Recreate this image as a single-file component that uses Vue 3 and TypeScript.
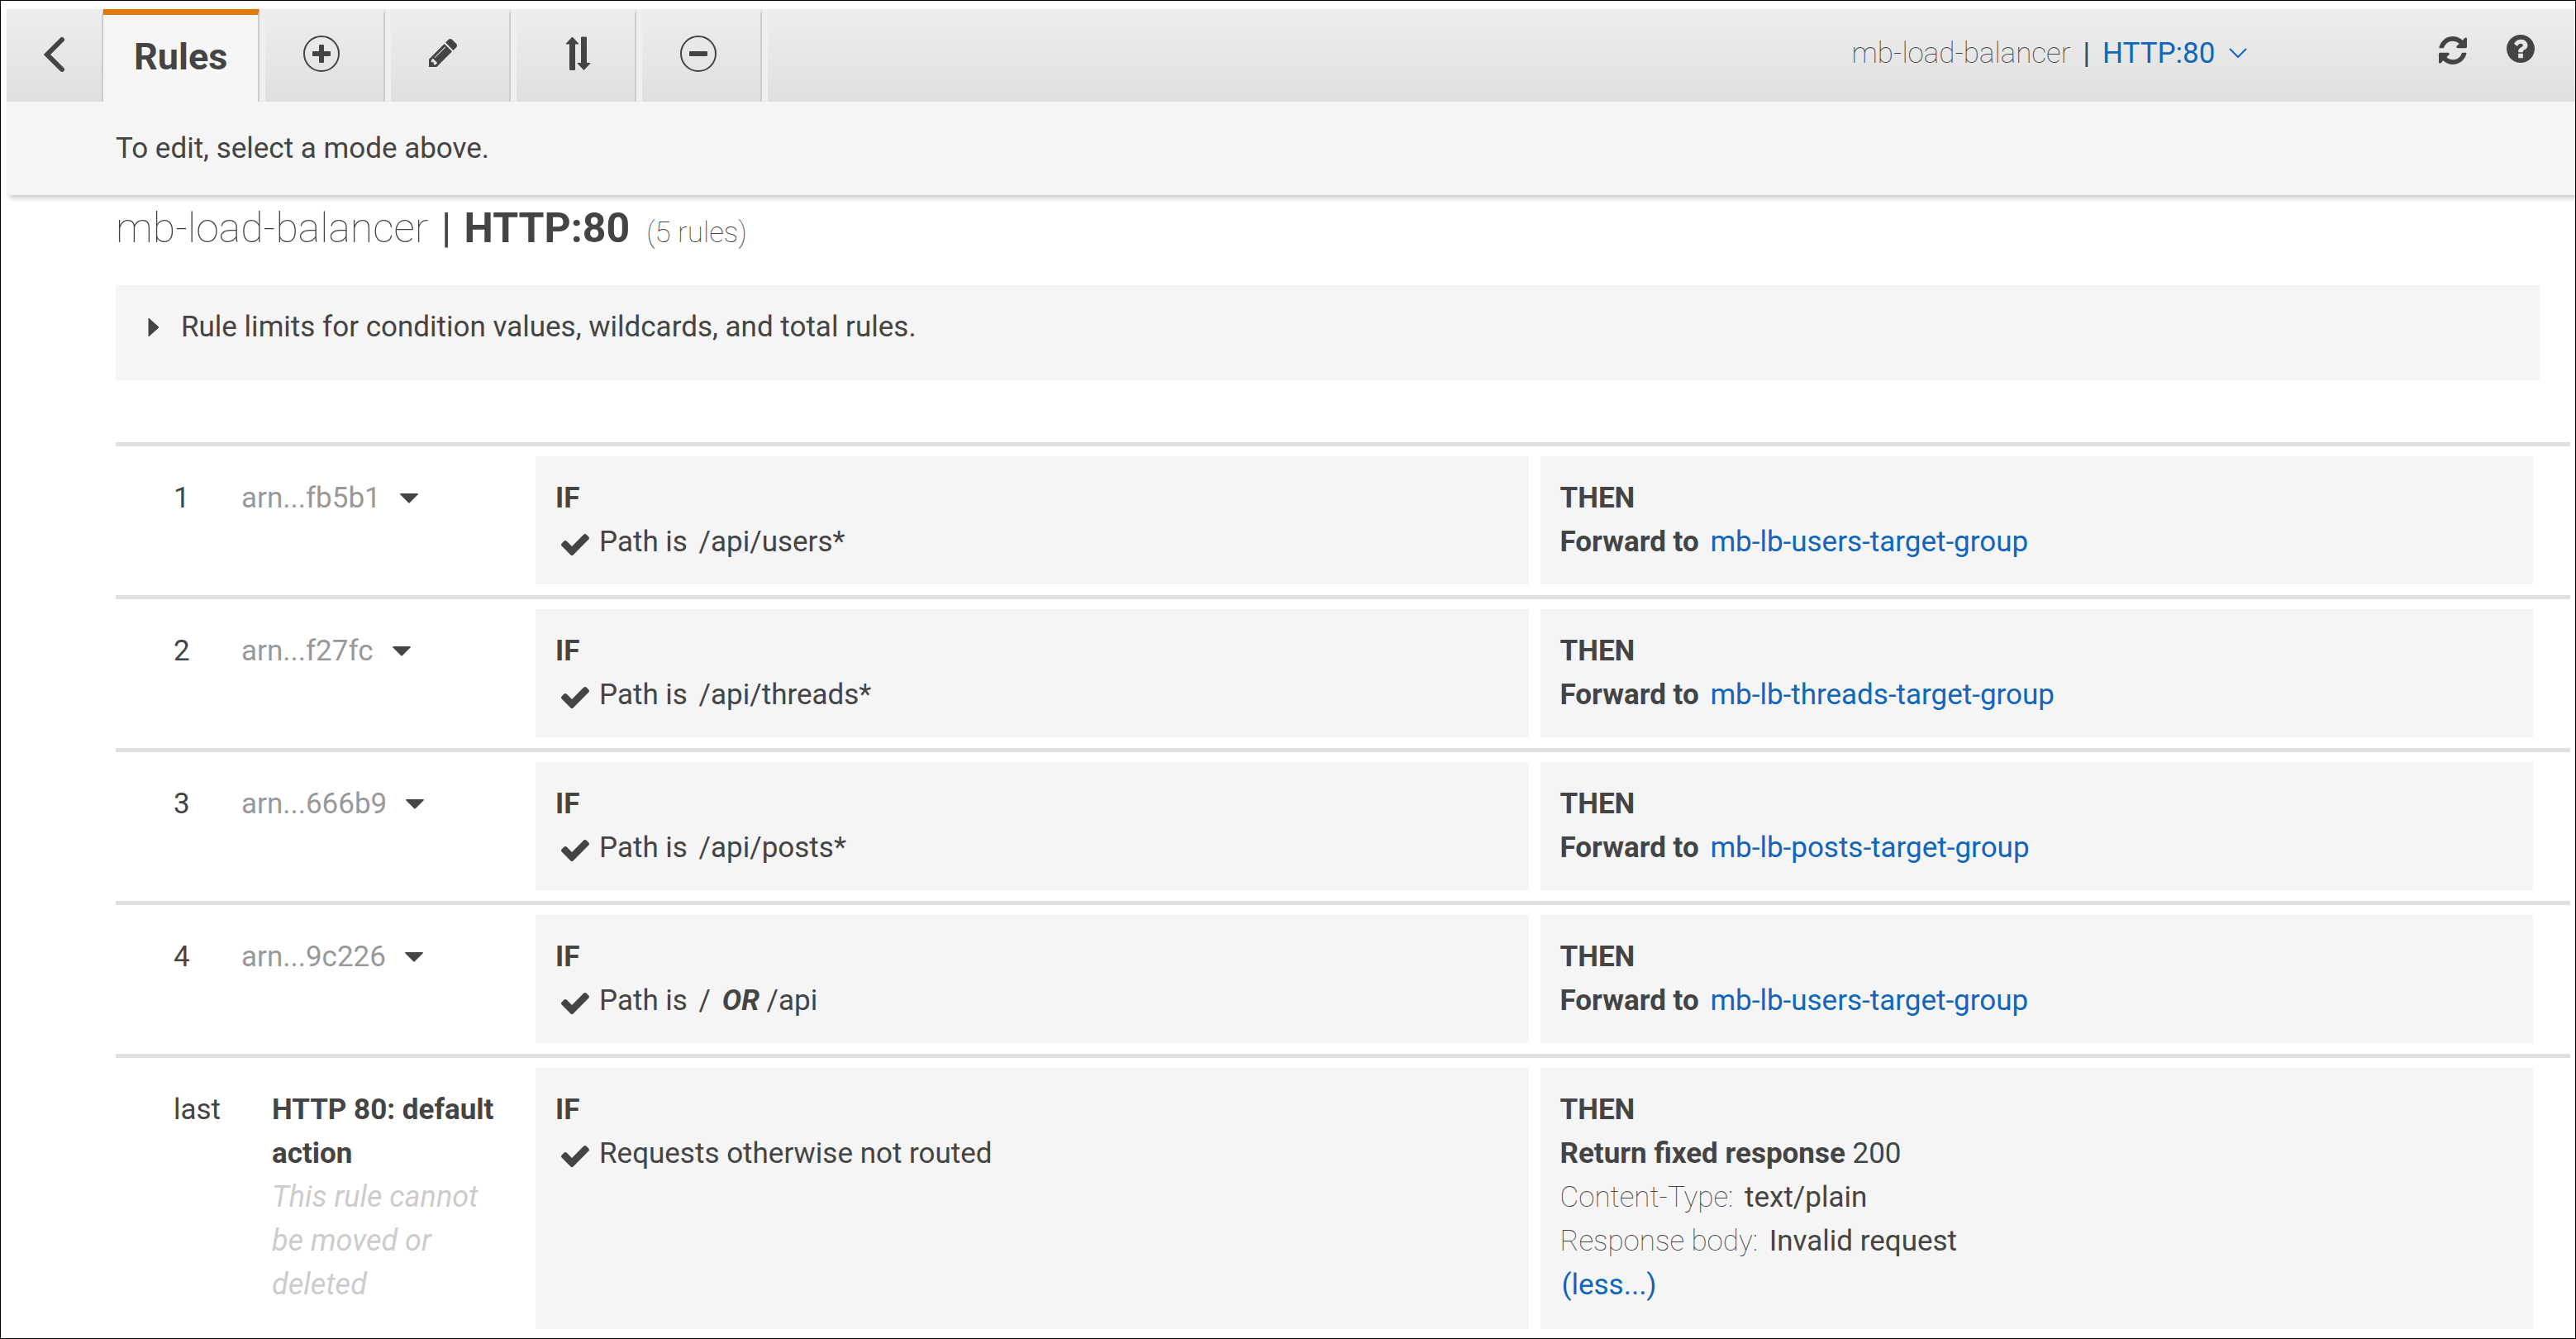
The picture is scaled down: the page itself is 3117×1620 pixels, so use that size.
<script setup lang="ts">
import { ref } from 'vue'

interface Rule {
  order: string
  arn: string
  paths: string[]
  target: string
}

const balancer = 'mb-load-balancer'
const listeners = ['HTTP:80']
const listener = ref(listeners[0])

const rules: Rule[] = [
  { order: '1', arn: 'arn...fb5b1', paths: ['/api/users*'], target: 'mb-lb-users-target-group' },
  { order: '2', arn: 'arn...f27fc', paths: ['/api/threads*'], target: 'mb-lb-threads-target-group' },
  { order: '3', arn: 'arn...666b9', paths: ['/api/posts*'], target: 'mb-lb-posts-target-group' },
  { order: '4', arn: 'arn...9c226', paths: ['/', '/api'], target: 'mb-lb-users-target-group' },
]

const checkPath =
  'M1671 566q0 40-28 68l-724 724-136 136q-28 28-68 28t-68-28l-136-136-362-362q-28-28-28-68t28-68l136-136q28-28 68-28t68 28l294 295 656-657q28-28 68-28t68 28l136 136q28 28 28 68z'
</script>

<template>
  <div class="page">
    <header class="header">
      <nav class="toolbar" aria-label="Rule modes">
        <button class="tab back" type="button" aria-label="Back">
          <svg class="tab-icon" viewBox="0 0 100 44" aria-hidden="true">
            <path d="M59 5 L41 23 L59 41" fill="none" stroke="#444" stroke-width="6" stroke-linecap="round" />
          </svg>
        </button>
        <button class="tab active" type="button">Rules</button>
        <button class="tab mode" type="button" aria-label="Add rules">
          <svg class="tab-icon" viewBox="0 0 100 44" aria-hidden="true">
            <circle cx="46" cy="22" r="21" fill="none" stroke="#444" stroke-width="2" />
            <rect x="35" y="19" width="22" height="6" rx="1" />
            <rect x="43" y="11" width="6" height="22" rx="1" />
          </svg>
        </button>
        <button class="tab mode" type="button" aria-label="Edit rules">
          <svg class="tab-icon" viewBox="0 0 100 44" aria-hidden="true">
            <svg x="24" y="4" width="34" height="34" viewBox="128 149 1515 1515">
              <path d="M491 1536l91-91-235-235-91 91v107h128v128h107zm523-928q0-22-22-22-10 0-17 7l-542 542q-7 7-7 17 0 22 22 22 10 0 17-7l542-542q7-7 7-17zm-54-192l416 416-832 832h-416v-416zm683 96q0 53-37 90l-166 166-416-416 166-165q36-38 90-38 53 0 91 38l235 234q37 39 37 91z" />
            </svg>
          </svg>
        </button>
        <button class="tab mode" type="button" aria-label="Reorder rules">
          <svg class="tab-icon" viewBox="0 0 100 44" aria-hidden="true">
            <path d="M45.500 2 L53 10 H48.500 V41.500 H42.500 V10 H38 Z" stroke="#444" stroke-linejoin="round" />
            <path d="M59.500 41.500 L52 33.500 H56.500 V2 H62.500 V33.500 H67 Z" stroke="#444" stroke-linejoin="round" />
          </svg>
        </button>
        <button class="tab mode" type="button" aria-label="Delete rules">
          <svg class="tab-icon" viewBox="0 0 100 44" aria-hidden="true">
            <circle cx="46" cy="22" r="21" fill="none" stroke="#444" stroke-width="2" />
            <rect x="35" y="19" width="22" height="6" rx="1" />
          </svg>
        </button>
        <div class="tools">
          <label class="thin" for="listener">{{ balancer }}</label>
          <span class="bar">|</span>
          <select id="listener" v-model="listener" class="listener">
            <option v-for="item in listeners" :key="item">{{ item }}</option>
          </select>
          <svg class="chevron" viewBox="0 0 22 12" aria-hidden="true">
            <path d="M1 1 L11 11 L21 1" fill="none" stroke="#16b" stroke-width="2" />
          </svg>
          <button class="tool" type="button" aria-label="Refresh">
            <svg class="refresh" viewBox="128 128 1536 1536" aria-hidden="true">
              <path d="M1639 1056q0 5-1 7-64 268-268 434.500t-478 166.500q-146 0-282.500-55t-243.500-157l-129 129q-19 19-45 19t-45-19-19-45v-448q0-26 19-45t45-19h448q26 0 45 19t19 45-19 45l-137 137q71 66 161 102t187 36q134 0 250-65t186-179q11-17 53-117 8-23 30-23h192q13 0 22.500 9.500t9.500 22.500zm25-800v448q0 26-19 45t-45 19h-448q-26 0-45-19t-19-45 19-45l138-138q-148-137-349-137-134 0-250 65t-186 179q-11 17-53 117-8 23-30 23h-199q-13 0-22.500-9.500t-9.500-22.500v-7q65-268 270-434.500t480-166.500q146 0 284 55.500t245 156.500l130-129q19-19 45-19t45 19 19 45z" />
            </svg>
          </button>
          <button class="tool" type="button" aria-label="Help">
            <svg class="help" viewBox="128 128 1536 1536" aria-hidden="true">
              <path d="M1024 1376v-192q0-14-9-23t-23-9h-192q-14 0-23 9t-9 23v192q0 14 9 23t23 9h192q14 0 23-9t9-23zm256-672q0-88-55.500-163t-138.500-116-170-41q-243 0-371 213-15 24 8 42l132 100q7 6 19 6 16 0 25-12 53-68 86-92 34-24 86-24 48 0 85.500 26t37.500 59q0 38-20 61t-68 45q-63 28-115.500 86.500t-52.500 125.500v36q0 14 9 23t23 9h192q14 0 23-9t9-23q0-19 21.500-49.500t54.500-49.500q32-18 49-28.500t46-35 44.500-48 28-60.500 12.500-81zm384 192q0 209-103 385.500t-279.500 279.500-385.500 103-385.500-103-279.500-279.500-103-385.500 103-385.500 279.500-279.500 385.500-103 385.500 103 279.500 279.500 103 385.500z" />
            </svg>
          </button>
        </div>
      </nav>
      <p class="hint">To edit, select a mode above.</p>
    </header>

    <main class="content">
      <h1 class="title">
        <span class="thin">{{ balancer }}</span> <span class="bar">|</span> <b>{{ listener }}</b>
        <small class="count">({{ rules.length + 1 }} rules)</small>
      </h1>

      <details class="limits">
        <summary>
          <svg class="marker" viewBox="0 0 14 24" aria-hidden="true"><path d="M1 1 L13 12 L1 23 Z" stroke="#444" stroke-linejoin="round" /></svg>
          Rule limits for condition values, wildcards, and total rules.
        </summary>
      </details>

      <ol class="rules">
        <li v-for="rule in rules" :key="rule.order" class="rule">
          <span class="order">{{ rule.order }}</span>
          <div class="name">
            <span class="arn">{{ rule.arn }}</span>
            <button class="caret" type="button" aria-label="Show full ARN">
              <svg viewBox="0 0 24 14" aria-hidden="true"><path d="M2 1 H22 Q23 1 23 2 L13 12 Q12 13 11 12 L1 2 Q1 1 2 1 Z" /></svg>
            </button>
          </div>
          <section class="box">
            <h2>IF</h2>
            <p class="condition">
              <svg class="check" viewBox="121 334 1550 1188" aria-hidden="true"><path :d="checkPath" /></svg>
              <span>Path is <span class="value"><template v-for="(path, i) in rule.paths" :key="path"><template v-if="i > 0">{{ ' ' }}<em class="value">OR</em>{{ ' ' }}</template>{{ path }}</template></span></span>
            </p>
          </section>
          <section class="box">
            <h2>THEN</h2>
            <p><b>Forward to</b> <a class="value" href="#">{{ rule.target }}</a></p>
          </section>
        </li>
        <li class="rule">
          <span class="order">last</span>
          <div class="name default">
            <b>HTTP 80: default action</b>
            <i>This rule cannot be moved or deleted</i>
          </div>
          <section class="box">
            <h2>IF</h2>
            <p class="condition">
              <svg class="check" viewBox="121 334 1550 1188" aria-hidden="true"><path :d="checkPath" /></svg>
              <span>Requests otherwise not routed</span>
            </p>
          </section>
          <section class="box">
            <h2>THEN</h2>
            <p><b>Return fixed response</b> 200</p>
            <p><span class="thin">Content-Type:</span> <span class="value">text/plain</span></p>
            <p><span class="thin">Response body:</span> <span class="value">Invalid request</span></p>
            <button class="less" type="button">(less...)</button>
          </section>
        </li>
      </ol>
    </main>
  </div>
</template>

<style>
body {
  margin: 0;
  background: #fff;
}
</style>

<style scoped>
.page {
  box-sizing: border-box;
  min-height: 100vh;
  border: 1px solid #000;
  padding: 10px 0 0 7px;
  font-family: Roboto, "Liberation Sans", sans-serif;
  font-size: 35px;
  line-height: 53px;
  color: #444;
}

.page * {
  box-sizing: border-box;
}

svg {
  display: block;
  flex: none;
  fill: #444;
}

button,
select {
  margin: 0;
  border: 0;
  padding: 0;
  background: none;
  font: inherit;
  color: inherit;
  cursor: pointer;
}

h2,
p {
  margin: 0;
  font-size: 35px;
}

h2,
b {
  font-weight: 700;
}

a {
  color: #16b;
  text-decoration: none;
}

.thin {
  font-weight: 100;
}

.header {
  background: #f5f5f5;
  box-shadow: 4px 4px 6px rgba(0, 0, 0, 0.2);
}

.toolbar {
  display: flex;
  height: 112px;
  background: #eee;
}

.tab {
  display: flex;
  justify-content: center;
  align-items: flex-start;
  flex: none;
  width: 145px;
  margin-right: 7px;
  border-top: 7px solid transparent;
  border-right: 2px solid #ccc;
  padding-top: 25px;
  background: linear-gradient(#eee, #dfdfdf) border-box;
}

.tab.back {
  width: 117px;
  margin-right: 0;
}

.tab.active {
  width: auto;
  padding: 24px 37px 0;
  border-top-color: #e17800;
  background: #f5f5f5;
  font-size: 45px;
  font-weight: 700;
  text-shadow: 0 3px 3px #fff;
}

.tab-icon {
  width: 100px;
  height: 44px;
}

.tools {
  display: flex;
  align-items: flex-start;
  justify-content: flex-end;
  flex: 1;
  padding: 27px 49px 0 0;
  background: linear-gradient(#eee, #dfdfdf);
}

.tools .bar {
  margin: 0 15px;
}

.listener {
  appearance: none;
  outline: 0;
  height: 53px;
  color: #16b;
}

.chevron {
  width: 22px;
  height: 12px;
  margin: 20px 232px 0 16px;
}

.tool + .tool {
  margin-left: 48px;
}

.refresh,
.help {
  width: 34px;
  height: 34px;
}

.refresh {
  margin-top: 6px;
}

.help {
  margin-top: 4px;
}

.hint {
  padding: 30px 132px;
}

.content {
  padding: 10px 6px 0 132px;
}

.title {
  margin: 0 0 39px;
  font-size: 50px;
  line-height: 60px;
  font-weight: 400;
}

.title .bar {
  margin: 0 3px;
}

.count {
  margin-left: 20px;
  font-size: 35px;
  line-height: 40px;
  font-weight: 100;
}

.limits {
  margin-right: 37px;
  padding: 24px 39px 38px;
  background: #f5f5f5;
}

.limits summary {
  display: flex;
  align-items: center;
  gap: 26px;
  list-style: none;
  cursor: pointer;
}

.marker {
  width: 14px;
  height: 24px;
}

.rules {
  margin: 75px 0 0;
  padding: 0;
  list-style: none;
}

.rule {
  display: flex;
  gap: 14px;
  border-top: 5px solid #dfdfdf;
  padding: 12px 45px 13px 70px;
}

.rule:last-child {
  padding-bottom: 10px;
}

.order {
  flex: none;
  width: 68px;
  padding-top: 24px;
}

.name {
  display: flex;
  align-items: center;
  align-self: flex-start;
  flex: none;
  gap: 22px;
  width: 342px;
  padding-top: 24px;
}

.name.default {
  display: block;
  padding-left: 37px;
  padding-right: 30px;
}

.default b,
.default i {
  display: block;
}

.default i {
  font-size: 36px;
  color: #ccc;
}

.arn {
  color: #999;
}

.caret svg {
  width: 24px;
  height: 14px;
}

.box {
  flex: 1 1 0;
  padding: 24px 24px 25px;
  background: #f5f5f5;
}

.condition {
  display: flex;
  align-items: center;
  gap: 12px;
  padding-left: 7px;
}

.check {
  width: 34px;
  height: 26px;
  margin-top: 7px;
}

.value {
  margin-left: 5px;
}

em {
  font-weight: 700;
}

.less {
  display: block;
  padding: 0 2px 2px;
  color: #16b;
}
</style>
